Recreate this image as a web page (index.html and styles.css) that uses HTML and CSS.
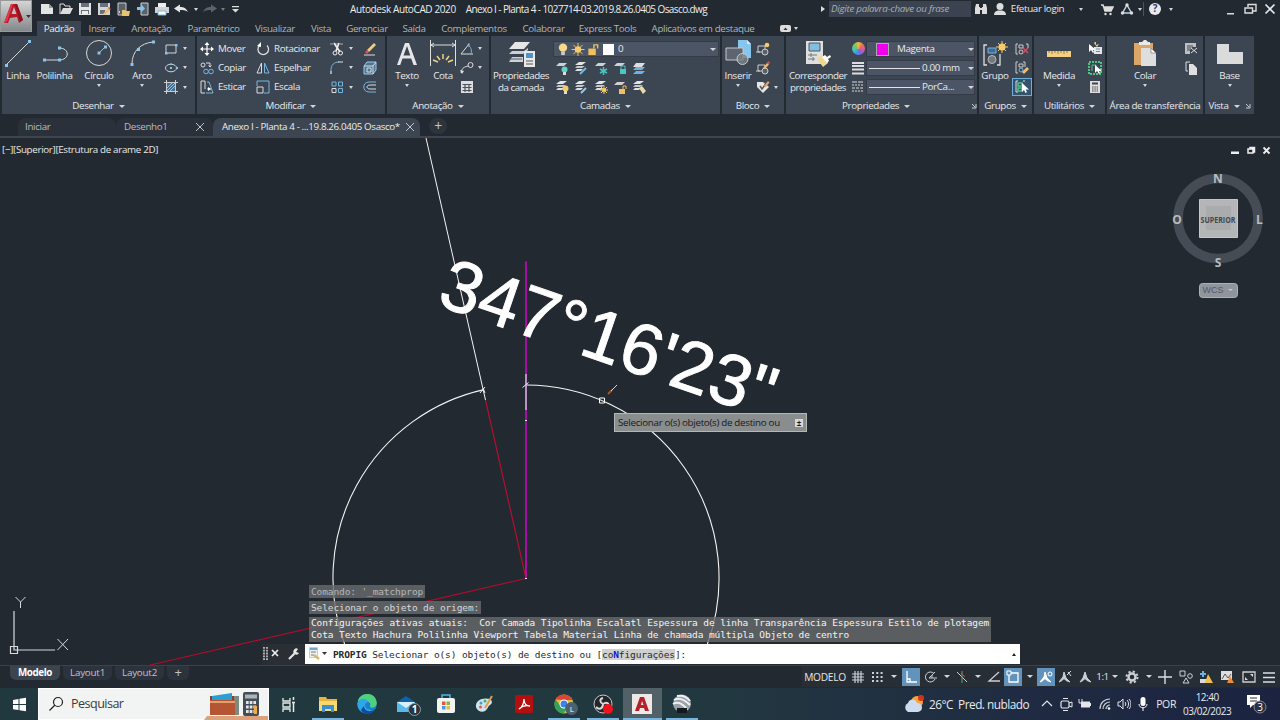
FILE: index.html
```
<!doctype html>
<html lang="pt-BR">
<head>
<meta charset="utf-8">
<title>Autodesk AutoCAD 2020</title>
<link rel="stylesheet" href="styles.css">
</head>
<body>

<svg class="defs">
	<symbol id="lay" viewBox="0 0 14 14">
		<path d="M5 1h7L8 4H1z" fill="#e4e6e6"/><path d="M3 5h8L8 7H1z" fill="#c6cacc"/><path d="M3 8h6L7 10H1z" fill="#dfe1e1"/>
	</symbol>
	<symbol id="lay1" viewBox="0 0 14 14"><path d="M4 2h8L9 5H1z" fill="#cfd2d3"/></symbol>
</svg>

<div class="top">
	<div class="app_btn">
		<svg width="32" height="32" viewBox="0 0 32 32"><path d="M3 22L10 3h6l6 16-4 3-2-6-7 1-2 5z" fill="#b8182a"/><path d="M10.500 13l2.500-7 2.500 7z" fill="#bcbec0"/><path d="M3 22L10 3h2L6 21z" fill="#e0394a"/><path d="M14 3h2l6 16-3 2z" fill="#8e1420"/><path d="M25 14h5l-2.500 3z" fill="#333"/></svg>
	</div>
	<div class="top_r">
		<div class="title_bar">
			<div class="quick">
				<svg viewBox="0 0 14 14"><path d="M1 2h8l4 4v6H1z" fill="#e3e4e4"/><path d="M9 2v4h4z" fill="#999"/></svg>
				<svg viewBox="0 0 14 14"><path d="M1 12V2h4l1 2h5v2" fill="none" stroke="#ddd"/><path d="M4 6h10l-3 6H1z" fill="#ddd"/></svg>
				<svg viewBox="0 0 14 14"><path d="M1 1h12v12H1z" fill="#e4e5e5"/><path d="M3 1h8v4H3zM3 8h8v4H3z" fill="#69717a"/><path d="M4 9h6v3H4z" fill="#eee"/></svg>
				<svg viewBox="0 0 14 14"><path d="M1 1h12v12H1z" fill="#d4d5d5"/><path d="M3 1h8v4H3zM3 8h5v4H3z" fill="#69717a"/><path d="M6 12l5-6 2 2-5 5z" fill="#efbd72"/><path d="M11 6l1-1 2 2-1 1z" fill="#d4524c"/></svg>
				<svg viewBox="0 0 14 14"><path d="M2 1h8v12H2z" fill="#59616b" stroke="#ccc"/><path d="M3 9h1v2H3z" fill="#ccc"/><path d="M6 8h3l1 1h4l-1 5H6z" fill="#e9c46c"/></svg>
				<svg viewBox="0 0 14 14"><path d="M5 1h7v12H5z" fill="#59616b" stroke="#ccc"/><path d="M1 5h4V2l4 4.500-4 4V8H1z" fill="#83c4ec"/></svg>
				<svg viewBox="0 0 14 14"><path d="M3 1h8v4H3z" fill="#eee"/><path d="M0 5h14v6H0z" fill="#d0d3d5"/><path d="M3 9h8v4H3z" fill="#fff" stroke="#7bb4d8"/></svg>
				<svg viewBox="0 0 14 14"><path d="M0 6.500l6-4v2.500c4 0 6 1 8 5-3-2-5-2-8-2v2.500z" fill="#e6e6e6"/></svg>
				<i class="dd"></i>
				<svg viewBox="0 0 14 14"><path d="M14 6.500l-6-4v2.500c-4 0-6 1-8 5 3-2 5-2 8-2v2.500z" fill="#5c636c"/></svg>
				<i class="dd dim"></i>
				<svg viewBox="0 0 14 14"><path d="M4 4h7v1.300H4zM4 7h7l-3.500 3.500z" fill="#ddd"/></svg>
			</div>
			<div class="doc_title"><span>Autodesk AutoCAD 2020</span><span>Anexo I - Planta 4 - 1027714-03.2019.8.26.0405 Osasco.dwg</span></div>
			<div class="info">
				<i class="right"></i>
				<div class="find">Digite palavra-chave ou frase</div>
				<svg viewBox="0 0 14 14"><path d="M2 2h3v3h1v7H1V6zM9 2h3l1 4v6H8V5h1zM6 6h2v2H6z" fill="#dcdcdc"/></svg>
				<svg viewBox="0 0 14 14"><circle cx="7" cy="4.500" r="3.500" fill="#ddd"/><path d="M1 13c0-3 2-4 4-4.500h4c2 .5 4 1.500 4 4.500z" fill="#ddd"/></svg>
				<span class="login">Efetuar login</span>
				<i class="dd"></i>
				<svg viewBox="0 0 14 14"><path d="M1 3h2l2 6h6l2-4H4" fill="none" stroke="#ddd" stroke-width="1.500"/><path d="M4 5h9l-2 4H5z" fill="#ddd"/><circle cx="5.500" cy="12" r="1.200" fill="#ddd"/><circle cx="10.500" cy="12" r="1.200" fill="#ddd"/></svg>
				<svg viewBox="0 0 14 14"><path d="M7 3l4.500 8h-9z" fill="none" stroke="#bcd0e0" stroke-width="1.500"/><circle cx="7" cy="3" r="1.700" fill="#ddd"/><circle cx="2.500" cy="11" r="1.700" fill="#ddd"/><circle cx="11.500" cy="11" r="1.700" fill="#ddd"/></svg>
				<i class="dd"></i>
				<b class="sep"></b>
				<div class="help">?</div>
				<i class="dd"></i>
			</div>
			<div class="win">
				<svg viewBox="0 0 14 14"><path d="M4 11h7v1.500H4z" fill="#ddd"/></svg>
				<svg viewBox="0 0 14 14"><path d="M5 5V2.500h8V9h-3M2 6h7.500v5H2z" fill="none" stroke="#ddd" stroke-width="1.400"/></svg>
				<svg viewBox="0 0 14 14"><path d="M2.500 2.500l9 9M11.500 2.500l-9 9" stroke="#e8e8e8" stroke-width="1.700"/></svg>
			</div>
		</div>
		<div class="menu">
			<span class="on">Padrão</span><span>Inserir</span><span>Anotação</span><span>Paramétrico</span><span>Visualizar</span><span>Vista</span><span>Gerenciar</span><span>Saída</span><span>Complementos</span><span>Colaborar</span><span>Express Tools</span><span>Aplicativos em destaque</span>
			<svg viewBox="0 0 11 7" width="11" height="7"><rect width="11" height="7" rx="2" fill="#ddd"/><path d="M3.500 5L5.500 2.500 7.500 5z" fill="#333"/></svg>
			<i class="dd"></i>
		</div>
	</div>
</div>

<div class="ribbon">
	<!-- Desenhar -->
	<div class="panel p_des">
		<div class="body">
			<div class="big"><svg viewBox="0 0 28 28"><path d="M2 26L25 3" stroke="#d8d8d8"/><path d="M1 25h3v3H1zM24 1h3v3h-3z" fill="#8ac4e8"/></svg>Linha</div>
			<div class="big"><svg viewBox="0 0 28 28"><path d="M3 21h15M18 9c11 0 11 12 0 12" fill="none" stroke="#d8d8d8"/><path d="M2 19.500h3v3H2zM17 19.500h3v3h-3zM17 7.500h3v3h-3z" fill="#8ac4e8"/></svg>Polilinha</div>
			<div class="big"><svg viewBox="0 0 28 28"><circle cx="14" cy="14" r="12.500" fill="none" stroke="#d8d8d8"/><path d="M14 14l6-6" stroke="#8ac4e8"/><path d="M12.500 12.500h3v3h-3zM19 6.500h3v3h-3z" fill="#8ac4e8"/></svg>Círculo<i class="dd"></i></div>
			<div class="big"><svg viewBox="0 0 28 28"><path d="M4 25C4 12 13 4 25 3" fill="none" stroke="#d8d8d8"/><path d="M2.500 24h3v3h-3zM9 9h3v3H9zM24 1.500h3v3h-3z" fill="#8ac4e8"/></svg>Arco<i class="dd"></i></div>
			<div class="col w34">
				<div class="row"><svg viewBox="0 0 14 14"><path d="M2 3h10v8H2z" fill="none" stroke="#d0d5da"/><path d="M1 10h2.500v2.500H1zM11 2h2.500v2.500H11z" fill="#8ac4e8"/></svg><i class="dd"></i></div>
				<div class="row"><svg viewBox="0 0 14 14"><ellipse cx="7" cy="7" rx="5.500" ry="3.800" fill="none" stroke="#d0d5da"/><path d="M6 6h2v2H6zM12 6h2v2h-2zM6 2.500h2v1.500H6z" fill="#8ac4e8"/></svg><i class="dd"></i></div>
				<div class="row"><svg viewBox="0 0 14 14"><path d="M3 3h8v8H3z" fill="#4c6f8e"/><path d="M3 8l5-5M3 11l8-8M6 11l5-5" stroke="#8ac4e8"/><path d="M2.500 0v14M11.500 0v14M0 2.500h14M0 11.500h14" stroke="#ccc"/></svg><i class="dd"></i></div>
			</div>
		</div>
		<div class="name">Desenhar<i class="dd"></i></div>
	</div>
	<!-- Modificar -->
	<div class="panel p_mod">
		<div class="body">
			<div class="col w56">
				<div class="row"><svg viewBox="0 0 14 14"><path d="M7 1v12M1 7h12" stroke="#fff" stroke-width="1.200"/><path d="M7 0l2.500 3h-5zM7 14l2.500-3h-5zM0 7l3-2.500v5zM14 7l-3-2.500v5z" fill="#fff"/></svg>Mover</div>
				<div class="row"><svg viewBox="0 0 14 14"><circle cx="3" cy="4" r="2" fill="none" stroke="#ddd"/><path d="M6 2h4v4M8.500 4.500L10 6l1.500-1.500" fill="none" stroke="#ddd"/><circle cx="6" cy="10.500" r="2.300" fill="none" stroke="#76b7df"/><circle cx="11" cy="10.500" r="2.300" fill="none" stroke="#76b7df"/></svg>Copiar</div>
				<div class="row"><svg viewBox="0 0 14 14"><path d="M5 13H1V1h4v8M7 9h4" fill="none" stroke="#ddd"/><path d="M7 2h2l4 11H6" fill="none" stroke="#76b7df"/><path d="M8 7l3 2-3 2z" fill="#fff"/></svg>Esticar</div>
			</div>
			<div class="col w74">
				<div class="row"><svg viewBox="0 0 14 14"><path d="M3.500 3.500A5.300 5.300 0 1 0 11 3.500" fill="none" stroke="#ddd" stroke-width="1.300"/><path d="M5 0v5l-4-1z" fill="#fff"/></svg>Rotacionar</div>
				<div class="row"><svg viewBox="0 0 14 14"><path d="M5.500 2v10H1z" fill="none" stroke="#ddd"/><path d="M8.500 2v10H13z" fill="none" stroke="#76b7df"/></svg>Espelhar</div>
				<div class="row"><svg viewBox="0 0 14 14"><path d="M1 6V1h12v12H8" fill="none" stroke="#76b7df"/><path d="M1 7h6v6H1z" fill="none" stroke="#ddd"/></svg>Escala</div>
			</div>
			<div class="col w32">
				<div class="row"><svg viewBox="0 0 14 14"><path d="M0 2h14" stroke="#aaa" stroke-dasharray="3 2"/><path d="M4 1l6 9M9 1L6 9" stroke="#eee" stroke-width="1.700"/><circle cx="5" cy="11" r="2" fill="none" stroke="#eee"/><circle cx="10.500" cy="11" r="2" fill="none" stroke="#eee"/></svg><i class="dd"></i></div>
				<div class="row"><svg viewBox="0 0 14 14"><path d="M1 13V9c0-5 3-8 8-8" fill="none" stroke="#76b7df"/><path d="M1 13v-3M8 1h5" stroke="#ddd"/></svg><i class="dd"></i></div>
				<div class="row"><svg viewBox="0 0 14 14"><path d="M2 2h4v4H2zM8.500 2h4v4h-4zM8.500 8.500h4v4h-4z" fill="none" stroke="#76b7df"/><path d="M2 8.500h4v4H2z" fill="none" stroke="#ddd"/></svg><i class="dd"></i></div>
			</div>
			<div class="col w20">
				<div class="row"><svg viewBox="0 0 14 14"><path d="M4 8l7-7 2 2-7 7z" fill="#f0cd83"/><path d="M2 10l2-2 2 2-2 2z" fill="#e4504c"/><path d="M1 13h11" stroke="#ddd"/></svg></div>
				<div class="row"><svg viewBox="0 0 14 14"><path d="M1 5l3-4h9v8l-3 4H1z" fill="#4b7696" stroke="#9ccbe6"/><path d="M1 5h9v8M10 5l3-4M4 7h4v4H4z" fill="none" stroke="#ddd"/></svg></div>
				<div class="row"><svg viewBox="0 0 14 14"><path d="M13 2H6c-7 0-7 10 0 10h7" fill="none" stroke="#76b7df"/><path d="M13 5H7c-4 0-4 4 0 4h6" fill="none" stroke="#ddd"/></svg></div>
			</div>
		</div>
		<div class="name">Modificar<i class="dd"></i></div>
	</div>
	<!-- Anotação -->
	<div class="panel p_ano">
		<div class="body">
			<div class="big w40"><svg viewBox="0 0 28 28"><path d="M4 26L12 4h4l8 22h-3.500l-2.300-6.500H9.500L7.200 26zM10.500 16.500h6.800L14 7z" fill="#e6e6e6" fill-rule="evenodd"/></svg>Texto<i class="dd"></i></div>
			<div class="big w32"><svg viewBox="0 0 28 28"><path d="M1.500 1v26M26.500 1v26M2 6h24M5 4L2 6l3 2M23 4l3 2-3 2" fill="none" stroke="#ddd"/><path d="M14 15v5M8 17l3 4M20 17l-3 4M4 21l5 2M24 21l-5 2" stroke="#f0d080" stroke-width="1.500"/></svg>Cota</div>
			<div class="col w28">
				<div class="row"><svg viewBox="0 0 14 14"><path d="M9 2L1 12h12" fill="none" stroke="#ddd"/><path d="M7 3c4 1 5 5 4 9M9 1v4" fill="none" stroke="#76b7df"/></svg><i class="dd"></i></div>
				<div class="row"><svg viewBox="0 0 14 14"><path d="M1 12c1-6 4-6 7-7" fill="none" stroke="#ddd"/><circle cx="10.500" cy="4" r="2.500" fill="none" stroke="#ddd"/><path d="M0 9l2 4 2-3z" fill="#ddd"/></svg><i class="dd"></i></div>
				<div class="row"><svg viewBox="0 0 14 14"><path d="M1 1h12v12H1z" fill="#ddd"/><path d="M2.500 4.500h9M2.500 7.500h9M2.500 10.500h9M5 4v8M9 4v8" stroke="#4b535f" stroke-width="1.200"/></svg></div>
			</div>
		</div>
		<div class="name">Anotação<i class="dd"></i></div>
	</div>
	<!-- Camadas -->
	<div class="panel p_cam">
		<div class="body">
			<div class="big w60"><svg viewBox="0 0 28 28"><path d="M8 3h15l-6 7H2z" fill="#e6e6e6"/><path d="M5 12h12l4-3v2l-5 4H2zM5 18h11v5H2z" fill="#cfd2d4"/><path d="M2 20h13" stroke="#59616c"/><path d="M17 12h11v16H17z" fill="#e9e9e9"/><path d="M19 14h7v5h-7z" fill="#4f96c8"/><path d="M19 22h7M19 25h7" stroke="#555"/></svg>Propriedades<br>da camada</div>
			<div class="lay_box">
				<div class="select">
					<svg viewBox="0 0 14 14"><circle cx="7" cy="5" r="4.500" fill="#f7d98a"/><path d="M5 9h4v4H5z" fill="#c9cbcc"/></svg>
					<svg viewBox="0 0 14 14"><circle cx="7" cy="7" r="3.500" fill="#f4cb68"/><path d="M7 0v14M0 7h14M2 2l10 10M12 2L2 12" stroke="#f4cb68"/></svg>
					<svg viewBox="0 0 14 14"><path d="M2 6h8v7H2z" fill="#f0c05c"/><path d="M8 6V2h4v4" fill="none" stroke="#f0c05c" stroke-width="1.500"/></svg>
					<b class="sw white"></b><span>0</span><i class="dd"></i>
				</div>
				<div class="lay_row">
					<svg viewBox="0 0 14 14"><use href="#lay1"/><circle cx="9.500" cy="8.500" r="3" fill="#63d5c6"/><path d="M8 11h3v3H8z" fill="#ddd"/></svg>
					<svg viewBox="0 0 14 14"><use href="#lay"/><path d="M6 13l6-6" stroke="#76b7df" stroke-width="2"/></svg>
					<svg viewBox="0 0 14 14"><use href="#lay1"/><path d="M9.500 6v8M6 8l7 4M13 8l-7 4" stroke="#4cc6c0" stroke-width="1.500"/></svg>
					<svg viewBox="0 0 14 14"><use href="#lay1"/><path d="M7 8h6v5H7z" fill="#4cc6c0"/><path d="M8 8V5h4v3" fill="none" stroke="#4cc6c0"/></svg>
					<svg viewBox="0 0 14 14"><path d="M4 2h9l-3 4H1z" fill="#ddd"/><path d="M4 6h9l-3 3H1zM4 10h9l-3 3H1z" fill="#6fb2e0"/></svg>
				</div>
				<div class="lay_row">
					<svg viewBox="0 0 14 14"><use href="#lay"/><circle cx="10.500" cy="8.500" r="3" fill="#f4cb68"/><path d="M9 11h3v3H9z" fill="#ddd"/></svg>
					<svg viewBox="0 0 14 14"><use href="#lay"/><path d="M7 13l5-5" stroke="#9bc8e4" stroke-width="2"/></svg>
					<svg viewBox="0 0 14 14"><use href="#lay"/><circle cx="10" cy="10" r="2" fill="#f4cb68"/><path d="M10 6v8M6 10h8M7 7l6 6M13 7l-6 6" stroke="#f4cb68"/></svg>
					<svg viewBox="0 0 14 14"><use href="#lay1"/><path d="M6 9h6v5H6z" fill="#f0c05c"/><path d="M10 9V6h3v3" fill="none" stroke="#f0c05c"/></svg>
					<svg viewBox="0 0 14 14"><use href="#lay"/><path d="M7 8l3-2 4 5-3 3z" fill="#ecdca4"/></svg>
				</div>
			</div>
		</div>
		<div class="name">Camadas<i class="dd"></i></div>
	</div>
	<!-- Bloco -->
	<div class="panel p_blo">
		<div class="body">
			<div class="big w32"><svg viewBox="0 0 28 28"><path d="M14 1h9l4 4v14H14z" fill="#86c6ee"/><path d="M23 1v4h4z" fill="#d5ecfa"/><path d="M2 9h17v12H2z" fill="#5d6570" stroke="#c8cacc"/><circle cx="18.500" cy="20" r="5.500" fill="#7b828a" fill-opacity=".8" stroke="#c8cacc"/></svg>Inserir<i class="dd"></i></div>
			<div class="col w30">
				<div class="row"><svg viewBox="0 0 14 14"><path d="M2 4h7v6H2z" fill="none" stroke="#ccc"/><circle cx="9" cy="10" r="3" fill="#59616d" stroke="#ccc"/><path d="M0 10h4" stroke="#ccc"/><circle cx="11" cy="3" r="2.300" fill="#f4cb68"/></svg></div>
				<div class="row"><svg viewBox="0 0 14 14"><path d="M2 4h7v6H2z" fill="none" stroke="#ccc"/><circle cx="9" cy="10" r="3" fill="#59616d" stroke="#ccc"/><path d="M0 10h4" stroke="#ccc"/><path d="M7 7l4-5 2 1.500L9 8z" fill="#efb972"/><path d="M11 2l1-2 2 1.500-1 2z" fill="#d4524c"/></svg></div>
				<div class="row"><svg viewBox="0 0 14 14"><path d="M1 2h6l6 5-6 6-6-6z" fill="#e6e6e6"/><path d="M4 6l2 3 5-7" fill="none" stroke="#555" stroke-width="1.500"/><path d="M8 6l4-5 1.500 1.500-4 5z" fill="#ef9f62"/></svg><i class="dd"></i></div>
			</div>
		</div>
		<div class="name">Bloco<i class="dd"></i></div>
	</div>
	<!-- Propriedades -->
	<div class="panel p_pro">
		<div class="body">
			<div class="big w64"><svg viewBox="0 0 28 28"><path d="M2 2h17v23H2z" fill="#dedfdf"/><path d="M5 4h11v8H5z" fill="#84bede" stroke="#4d5864"/><path d="M4 16h9M4 20h7M7 14v4M9 18v4" stroke="#777"/><path d="M13 20l5-4 6 8-5 4z" fill="#f0d794"/><path d="M18 18l3-2 2 2 3-2 1 2-3 2 1 2-2 2z" fill="#fff"/></svg>Corresponder<br>propriedades</div>
			<div class="col ic">
				<div class="row"><b class="wheel"></b></div>
				<div class="row"><svg viewBox="0 0 14 14"><path d="M1 2h12M1 5h12M1 8.500h12M1 12.500h12" stroke="#ddd" stroke-width="1.800"/></svg></div>
				<div class="row"><svg viewBox="0 0 14 14"><path d="M1 2h12" stroke="#ddd" stroke-dasharray="5 1"/><path d="M1 5h12M1 11h12" stroke="#ddd" stroke-dasharray="2 1"/><path d="M1 8h12" stroke="#ddd" stroke-dasharray="3 1"/></svg></div>
			</div>
			<div class="fields">
				<div class="select"><b class="sw mag"></b><span>Magenta</span><i class="dd"></i></div>
				<div class="select"><b class="ln"></b><span>0.00 mm</span><i class="dd"></i></div>
				<div class="select"><b class="ln"></b><span>PorCa...</span><i class="dd"></i></div>
			</div>
		</div>
		<div class="name">Propriedades<i class="dd"></i><svg class="launch" viewBox="0 0 6 6"><path d="M1 1l3 3M5 1v4H1" fill="none" stroke="#ccc"/></svg></div>
	</div>
	<!-- Grupos -->
	<div class="panel p_gru">
		<div class="body">
			<div class="big w32"><svg viewBox="0 0 28 28"><path d="M6 6H3v20h3M16 26h3V15" fill="none" stroke="#ddd" stroke-width="1.300"/><path d="M7 9h8v5H7z" fill="#3e6c98" stroke="#7ab2da"/><circle cx="11" cy="20.500" r="4" fill="#737a84" stroke="#bbb"/><circle cx="21" cy="8" r="3.500" fill="#f4cb68"/><path d="M21 2v12M15 8h12M17 4l8 8M25 4l-8 8" stroke="#f4cb68"/></svg>Grupo</div>
			<div class="col w21">
				<div class="row"><svg viewBox="0 0 14 14"><path d="M3 2H1v10h2M11 2h2v4M4 3h4v3H4z" fill="none" stroke="#ccc"/><circle cx="6" cy="10" r="2" fill="none" stroke="#ccc"/><path d="M8 6l5 5M13 6l-5 5" stroke="#dd4860" stroke-width="1.500"/></svg></div>
				<div class="row"><svg viewBox="0 0 14 14"><path d="M3 1H1v11h2M8 1h2v5M4 3h4v3H4z" fill="none" stroke="#ccc"/><circle cx="6" cy="9" r="2" fill="none" stroke="#76b7df"/><path d="M7 11l5-5 2 2-5 5z" fill="#efbd72"/></svg></div>
				<div class="row sel"><svg viewBox="0 0 14 14"><path d="M3 1H1v11h2M8 1h2" fill="none" stroke="#ddd"/><path d="M3 3h4v3H3zM3 8h4v3H3z" fill="none" stroke="#54c184" stroke-width="1.500"/><path d="M7 3v9l2-2 1.500 3 1.500-1-1.300-2.500H14z" fill="#fff"/></svg></div>
			</div>
		</div>
		<div class="name">Grupos<i class="dd"></i></div>
	</div>
	<!-- Utilitários -->
	<div class="panel p_uti">
		<div class="body">
			<div class="big w50"><svg viewBox="0 0 28 28"><path d="M2 12h24v6H2z" fill="#f3d084"/><path d="M4 12v2M7 12v3M10 12v2M13 12v3M16 12v2M19 12v3M22 12v2" stroke="#a8802e"/></svg>Medida<i class="dd"></i></div>
			<div class="col w21">
				<div class="row"><svg viewBox="0 0 14 14"><path d="M6 5h8v7H6z" fill="#e6e6e6"/><path d="M8 7h4M8 9.500h4" stroke="#5a95bd"/><path d="M1 2v8l2-2 2 3 1-1-1-2h3z" fill="#fff"/><path d="M6 1l2-2v4l3-1-2 3z" fill="#f4cb68"/></svg></div>
				<div class="row"><svg viewBox="0 0 14 14"><path d="M1 1h12v12H1z" fill="none" stroke="#54c184" stroke-width="2" stroke-dasharray="2 1"/><path d="M4 10V4h4v5h2" fill="none" stroke="#54c184"/><path d="M7 4v8l2-2 2 3 1-1-1-2h3z" fill="#fff"/></svg></div>
				<div class="row"><svg viewBox="0 0 14 14"><path d="M2 1h10v12H2z" fill="#ddd"/><path d="M4 3.500h6" stroke="#444" stroke-width="2"/><path d="M4 7h6M4 9h6M4 11h6" stroke="#444" stroke-dasharray="1.500 .8"/></svg></div>
			</div>
		</div>
		<div class="name">Utilitários<i class="dd"></i></div>
	</div>
	<!-- Área de transferência -->
	<div class="panel p_are">
		<div class="body">
			<div class="big w44"><svg viewBox="0 0 28 28"><path d="M3 4h19v22H3z" fill="#dba667"/><path d="M8 3h3l2-2h2l2 2h2v3H8z" fill="#e9e9e9"/><path d="M10 9h10l5 5v13H10z" fill="#dedede"/><path d="M20 9v5h5z" fill="#fff" stroke="#666" stroke-width=".6"/></svg>Colar<i class="dd"></i></div>
			<div class="col w24">
				<div class="row"><svg viewBox="0 0 14 14"><path d="M1 1h11v4H8l-2 3v4H1z" fill="#bdc0c2"/><path d="M3 4h6M3 6h4M3 8h3" stroke="#444"/><path d="M7 6l6 5M7 11l6-5" stroke="#ddd"/></svg></div>
				<div class="row"><svg viewBox="0 0 14 14"><path d="M6 1H2v9h2" fill="none" stroke="#ddd"/><path d="M5 3h4l4 4v7H5z" fill="#e0e0e0"/></svg></div>
			</div>
		</div>
		<div class="name">Área de transferência</div>
	</div>
	<!-- Vista -->
	<div class="panel p_vis">
		<div class="body">
			<div class="big w49"><svg viewBox="0 0 28 28"><path d="M1 5h12v8h14v12H1z" fill="#dadcdc"/></svg>Base<i class="dd"></i></div>
		</div>
		<div class="name">Vista<i class="dd"></i><svg class="launch" viewBox="0 0 6 6"><path d="M1 1l3 3M5 1v4H1" fill="none" stroke="#ccc"/></svg></div>
	</div>
</div>

<div class="files">
	<div class="tab t1">Iniciar</div>
	<div class="tab t2">Desenho1<i class="x"></i></div>
	<div class="tab t3 on">Anexo I - Planta 4 - ...19.8.26.0405 Osasco*<i class="x"></i></div>
	<div class="add">+</div>
</div>

<div class="canvas">
	<svg class="draw" width="1280" height="527" viewBox="0 138 1280 527">
		<path d="M526 578.500L150 665" stroke="#a80f2c" stroke-width="1.200"/>
		<path d="M485.500 400L526 578.500" stroke="#b40f2c" stroke-width="1.200"/>
		<path d="M426 138L485.500 400" stroke="#f4f4f4"/>
		<path d="M484 389.600A193 193 0 0 0 344.600 644M526 385A193 193 0 0 1 707.400 644" fill="none" stroke="#f4f4f4" stroke-width="1.100"/>
		<path d="M526 261.500V578" stroke="#a410a4" stroke-width="2"/>
		<path d="M526 374v36" stroke="#c8c8d0" stroke-width="1.400"/>
		<path d="M480 393l5-6M522.500 387.500l6-5M525 420.500h2M525 578.500h2M483 388l2 5" stroke="#eee"/>
		<text class="angle" transform="translate(435.500 304.500) rotate(19)">347°16'23"</text>
		<path d="M599.500 398h5v5h-5z" fill="none" stroke="#fff"/>
		<path d="M608 394l4-4" stroke="#a05a2a" stroke-width="2"/><path d="M611 391l6-6" stroke="#ddd8c8"/>
		<!-- UCS -->
		<path d="M14 611v39h41M10.500 646.500h7v7h-7z" fill="none" stroke="#d8dadc" stroke-width="1.200"/>
		<path d="M15.500 597l5 5 5-5M20.500 602v6M57.500 639l10.500 11M68 639L57.500 650" fill="none" stroke="#d8dadc"/>
		<!-- viewcube -->
		<circle cx="1218" cy="218.500" r="40" fill="none" stroke="#454c55" stroke-width="9.500"/>
		<path d="M1199.500 199.500h38v38h-38z" fill="#b3b5b6" stroke="#c4c6c7"/><path d="M1206 206h25v24h-25z" fill="#a9abac"/>
		<text class="cube" x="1200.500" y="222.500" textLength="35" lengthAdjust="spacingAndGlyphs">SUPERIOR</text>
		<g class="compass"><text x="1218" y="182.500">N</text><text x="1218" y="266.500">S</text><text x="1177" y="224">O</text><text x="1259.500" y="224">L</text></g>
		<rect x="1199.500" y="283.500" width="38" height="14" rx="3" fill="#8f949d" stroke="#aeb2b8"/>
		<text class="wcs" x="1202.500" y="293">WCS</text><path d="M1228 289h5l-2.500 2z" fill="#c8cacc"/>
		<path d="M1231 151.500h8v2.500h-8z" fill="#eee"/><path d="M1248 149h5v4h-5zM1250 149v-1.500h4.500v4.500h-1.500" fill="none" stroke="#eee" stroke-width="1.500"/><path d="M1263.500 147.500l6 6M1269.500 147.500l-6 6" stroke="#eee" stroke-width="1.800"/>
	</svg>
	<div class="vp_label">[−][Superior][Estrutura de arame 2D]</div>
	<div class="tip">Selecionar o(s) objeto(s) de destino ou<b>±</b></div>
	<div class="cmd">
		<div class="hist dim1">Comando: '_matchprop</div>
		<div class="hist dim2">Selecionar o objeto de origem:</div>
		<div class="hist two">Configurações ativas atuais:  Cor Camada Tipolinha Escalatl Espessura de linha Transparência Espessura Estilo de plotagem
Cota Texto Hachura Polilinha Viewport Tabela Material Linha de chamada múltipla Objeto de centro</div>
		<div class="line">
			<div class="grip">
				<svg width="42" height="20" viewBox="0 0 42 20"><path d="M2 3v13M5 3v13" stroke="#ccc" stroke-width="1.600" stroke-dasharray="1.800 1"/><path d="M10 6l6 6M16 6l-6 6" stroke="#eee" stroke-width="1.700"/><path d="M27 15l7-7" stroke="#e6e6e6" stroke-width="2.200"/><path d="M36 5a3 3 0 1 0 1 4l-3-1z" fill="#e6e6e6"/></svg>
			</div>
			<div class="input">
				<svg width="20" height="16" viewBox="0 0 20 16"><path d="M1.500 1.500h8v10h-8z" fill="#eef3f6" stroke="#c4ccd2"/><path d="M2 3h7" stroke="#6fa8cc" stroke-width="2"/><path d="M3 6h5M3 9h3" stroke="#777"/><path d="M6 9l5 4" stroke="#d8b868" stroke-width="2.500"/><path d="M14 6h5l-2.500 3z" fill="#333"/></svg>
				<span><b>PROPIG</b> Selecionar o(s) objeto(s) de destino ou [<em>co<u>N</u>figurações</em>]:</span>
				<i class="up"></i>
			</div>
		</div>
	</div>
</div>

<div class="status">
	<div class="layouts">
		<span class="on">Modelo</span><span>Layout1</span><span>Layout2</span><span class="plus">+</span>
	</div>
	<div class="tools">
		<span class="mod">MODELO</span>
		<svg viewBox="0 0 14 14"><path d="M4 1v12M7 1v12M10 1v12M1 4h12M1 7h12M1 10h12" stroke="#cdd0d4" stroke-width="1.200"/></svg>
		<svg viewBox="0 0 14 14"><path d="M2 3h11M2 7h11M2 11h11" stroke="#cdd0d4" stroke-width="2" stroke-dasharray="2 2.300"/></svg>
		<i class="dd"></i>
		<svg class="hi" viewBox="0 0 14 14"><path d="M3 1v11h10M3 9h3v3" fill="none" stroke="#fff" stroke-width="1.300"/></svg>
		<svg viewBox="0 0 14 14"><path d="M11 3.500A5 5 0 1 0 12 9M6 8l6-6M6 8h8M9 5v3" fill="none" stroke="#cdd0d4"/></svg>
		<i class="dd"></i>
		<svg viewBox="0 0 14 14"><path d="M2 2l10 10" stroke="#cdd0d4"/><path d="M7 1v12" stroke="#5d9f74"/><path d="M6 3l4 4" stroke="#b05a62"/></svg>
		<i class="dd"></i>
		<svg viewBox="0 0 14 14"><path d="M12 2L2 11h11" fill="none" stroke="#cdd0d4" stroke-width="1.300"/></svg>
		<svg class="hi" viewBox="0 0 14 14"><path d="M3 3h9v9H3z" fill="none" stroke="#fff" stroke-width="1.300"/><path d="M1 1h4v4H1z" fill="#6193bd" stroke="#fff"/></svg>
		<i class="dd"></i>
		<svg class="hi" viewBox="0 0 14 14"><path d="M6 2l2 6 4 4-4-1.500-2-2-2 2L1 12l4-5z" fill="#fff" stroke="#fff"/><circle cx="11" cy="4" r="2" fill="none" stroke="#fff"/></svg>
		<svg viewBox="0 0 14 14"><path d="M6 2l2 6 4 4-4-1.500-2-2-2 2L1 12l4-5z" fill="#cdd0d4" stroke="#cdd0d4"/><path d="M9 5l4-4M10 2l3 4" stroke="#ddd"/></svg>
		<svg viewBox="0 0 14 14"><path d="M7 2l2 6 4 4-4-1.500-2-2-2 2L2 12l3-4z" fill="#cdd0d4" stroke="#cdd0d4"/></svg>
		<span class="one">1:1</span>
		<i class="dd"></i>
		<svg viewBox="0 0 14 14"><circle cx="7" cy="7" r="3.500" fill="none" stroke="#cdd0d4" stroke-width="2.400"/><circle cx="7" cy="7" r="5.500" fill="none" stroke="#cdd0d4" stroke-width="2" stroke-dasharray="2.200 2.120"/></svg>
		<i class="dd"></i>
		<svg viewBox="0 0 14 14"><path d="M7 0v14M0 7h14" stroke="#dcdfe2" stroke-width="1.400"/></svg>
		<svg viewBox="0 0 14 14"><path d="M1 1h5v5H1zM7 8l3 5H4z" fill="none" stroke="#cdd0d4"/><circle cx="11" cy="6" r="2.300" fill="none" stroke="#cdd0d4"/></svg>
		<svg viewBox="0 0 14 14"><path d="M1 4h6M4 1v6" stroke="#6fb2e0" stroke-width="2"/><path d="M1 9h8v4H1z" fill="#d9dadb"/><path d="M9 4l5 9H6z" fill="#f0c04e"/></svg>
		<svg viewBox="0 0 14 14"><path d="M1 1h11v9H1z" fill="#dedede"/><path d="M2 9l3-5 3 4 3-4" fill="none" stroke="#555"/><path d="M10 6l4 7H7z" fill="#ee8b3a"/></svg>
		<svg viewBox="0 0 14 14"><path d="M1 2h12v10H1z" fill="none" stroke="#cdd0d4" stroke-width="1.300"/><path d="M8 4h3v3zM6 10H3V7z" fill="#ddd"/></svg>
		<svg viewBox="0 0 14 14"><path d="M1 3h12M1 7.500h12M1 12h12" stroke="#dcdfe2" stroke-width="1.400"/></svg>
	</div>
</div>

<div class="task">
	<div class="start"><svg width="15" height="15" viewBox="0 0 15 15"><path d="M1 3l5.500-1v5H1zM7.500 1.800L14 .8V7H7.500zM1 8h5.500v5L1 12.200zM7.500 8H14v6.200l-6.500-1z" fill="#fff"/></svg></div>
	<div class="search">
		<svg width="16" height="16" viewBox="0 0 16 16"><circle cx="10" cy="6" r="4.500" fill="none" stroke="#222" stroke-width="1.200"/><path d="M7 9l-5.500 5.500" stroke="#222" stroke-width="1.200"/></svg>
		<span>Pesquisar</span>
		<svg class="art" width="64" height="32" viewBox="0 0 64 32"><path d="M3 28h61v4H0z" fill="#d9a27c"/><path d="M6 8h29v19H6z" fill="#8a4028"/><path d="M30 8h5v19h-5z" fill="#7c8a80"/><path d="M8 8l20-3v8H8z" fill="#2a9fd0"/><path d="M6 12h25v15H6z" fill="#b55534"/><path d="M6 14h25" stroke="#e0a070" stroke-width="2"/><rect x="39" y="4" width="16" height="24" rx="2" fill="#454e57"/><path d="M41 6.500h12v4H41z" fill="#a8b6bb"/><path d="M42 14.500h10M42 19h10M42 23.500h10" stroke="#e2e6e8" stroke-width="3" stroke-dasharray="2.700 1"/><path d="M50 18h3v8h-3z" fill="#f2a94a"/></svg>
	</div>
	<div class="apps">
		<div class="app"><svg viewBox="0 0 20 20"><path d="M4 4v3h7V4M4 9h7v4H4zM4 18v-3h7v3" fill="none" stroke="#e8eaec" stroke-width="1.300"/><path d="M14.500 3v3M14.500 8v10M13 8.500h3" stroke="#e8eaec" stroke-width="1.500"/></svg></div>
		<div class="app run"><svg viewBox="0 0 20 20"><path d="M1 3h7l1 2h10v12H1z" fill="#e9b43c"/><path d="M1 7h18v10H1z" fill="#f8d970"/><path d="M4 18v-7h12v7h-3v-3H7v3z" fill="#3b8fd0"/></svg></div>
		<div class="app"><svg viewBox="0 0 20 20"><circle cx="10" cy="10" r="9.800" fill="#1b7fd0"/><path d="M1 6C5-3 19-2 19.800 9c0 5-7 6-7 3 3-3-5-8-11-4z" fill="#4fd07f"/><path d="M.5 9C3 3 10 4 11 8c-5 1-4 9 6 8-6 6-17 3-16.500-7z" fill="#2fa6e8"/><path d="M7 12c0 5 6 7 11 3-3 6-12 6-14 1z" fill="#104a9c"/></svg></div>
		<div class="app"><svg viewBox="0 0 20 20"><path d="M0 8l9-6 9 6v10H0z" fill="#1261a8"/><path d="M0 8h18v10H0z" fill="#58b9ee"/><path d="M0 8l9 6 9-6z" fill="#d7effc"/></svg><b class="badge">1</b></div>
		<div class="app"><svg viewBox="0 0 20 20"><path d="M6 4V1h8v3" fill="none" stroke="#4bb5e8" stroke-width="1.500"/><rect x="1" y="4" width="18" height="15" rx="2" fill="#f3f3f3"/><path d="M6 7.500h3.500V11H6z" fill="#e65b3a"/><path d="M10.500 7.500H14V11h-3.500z" fill="#7fb842"/><path d="M6 12h3.500v3.500H6z" fill="#3f9fe0"/><path d="M10.500 12H14v3.500h-3.500z" fill="#f2b93a"/></svg></div>
		<div class="app"><svg viewBox="0 0 20 20"><path d="M1 13C0 6 8 3 15 5c3 2 2 5 0 6s-2 4-5 6-8 0-9-4z" fill="#cfe3ee"/><circle cx="6" cy="9" r="1.500" fill="#3f9fe0"/><circle cx="10" cy="7" r="1.500" fill="#4fae5a"/><circle cx="5.500" cy="13" r="1.500" fill="#e65b3a"/><path d="M10 14l7-12" stroke="#dca04c" stroke-width="2"/></svg></div>
		<div class="app"><svg viewBox="0 0 20 20"><rect x="1" y="1" width="18" height="18" rx="2" fill="#b40e0e"/><path d="M5 15c3-1 5-6 5-10 0 4 2 7 6 7-4-1-8 0-11 3z" fill="none" stroke="#fff" stroke-width="1.300"/></svg></div>
		<div class="app run"><svg viewBox="0 0 20 20"><circle cx="10" cy="10" r="9.500" fill="#e2b93b"/><path d="M1.500 5.500A9.500 9.500 0 0 1 18.500 6H10z" fill="#dc4437"/><path d="M1.500 5.500A9.500 9.500 0 0 0 10 19.500l2-6-5-1z" fill="#33a158"/><circle cx="10" cy="10" r="4.500" fill="#fff"/><circle cx="10" cy="10" r="3.500" fill="#3f7fe8"/></svg><b class="badge l">L</b></div>
		<div class="app run"><svg viewBox="0 0 20 20"><circle cx="10" cy="10" r="9" fill="#23262a" stroke="#c8c8c8"/><path d="M10 4c-4 1-3 5 0 6M10 10c4-3 7 0 5 4M10 10c0 5-4 6-7 3" fill="none" stroke="#d8d8d8" stroke-width="2"/><circle cx="15" cy="15" r="5" fill="#f0121c"/></svg></div>
		<div class="app run act"><svg viewBox="0 0 20 20"><path d="M0 0h20v20H0z" fill="#efe9e6"/><path d="M3 17L8 3h4l5 14h-4l-1-3H8l-1 3zM9 11h2.500L10 7z" fill="#b4202c" fill-rule="evenodd"/></svg></div>
		<div class="app run"><svg viewBox="0 0 20 20"><circle cx="10" cy="9.500" r="9" fill="#9aa1a8"/><path d="M2 6c5-3 11 0 16 5M1 10c5-3 11 0 14 6M5 2c5-1 10 1 13 5" fill="none" stroke="#eef0f2" stroke-width="2"/><path d="M5 14h10v5H5z" fill="#15181c"/></svg></div>
	</div>
	<div class="tray">
		<svg width="22" height="20" viewBox="0 0 22 20"><circle cx="14" cy="8" r="6" fill="#f5a33a"/><circle cx="18" cy="4" r="3" fill="#d8321e"/><path d="M5 18a5 5 0 0 1 0-9c2-5 8-4 9 0 6 0 7 8 1 9z" fill="#cfdcf0"/></svg>
		<span class="wt">26°C&nbsp;&nbsp;Pred. nublado</span>
		<svg viewBox="0 0 14 14"><path d="M2 9l5-5 5 5" fill="none" stroke="#e4e6ea" stroke-width="1.200"/></svg>
		<svg viewBox="0 0 14 14"><rect x="2" y="4" width="8" height="7" rx="1.500" fill="none" stroke="#e4e6ea" stroke-width="1.200"/><path d="M10 6l3-1v5l-3-1M4 1.500h5M4 13.500h5" fill="none" stroke="#e4e6ea"/></svg>
		<svg viewBox="0 0 14 14"><path d="M3 4.500h9v6H3z" fill="#e4e6ea"/><path d="M1 2v4h3V2M12.500 6v3" fill="none" stroke="#e4e6ea"/></svg>
		<svg viewBox="0 0 14 14"><path d="M2 12C2 6 6 2 12 2M5 12c0-4 3-7 7-7M8 12c0-2 2-4 4-4" fill="none" stroke="#c8ccd2" stroke-width="1.200"/><circle cx="11" cy="11.500" r="1.300" fill="#fff"/></svg>
		<svg viewBox="0 0 14 14"><path d="M1 5h2l3-3v10L3 9H1zM8 5c1 1 1 3 0 4M10 3c2 2 2 6 0 8M12 2c2.500 3 2.500 7 0 10" fill="none" stroke="#e4e6ea"/></svg>
		<svg viewBox="0 0 14 14"><rect x="4.500" y="0" width="5" height="9" rx="2.500" fill="#fff"/><path d="M3 7c0 5 8 5 8 0M7 11v3" fill="none" stroke="#fff"/></svg>
		<span class="por">POR</span>
		<div class="clock">12:40<br>03/02/2023</div>
		<div class="note"><svg width="22" height="22" viewBox="0 0 22 22"><path d="M1 2h13v10H7l-3 3v-3H1z" fill="#fff"/><path d="M4 5h7M4 8h7" stroke="#333"/><circle cx="14" cy="14" r="6" fill="#2a2e40" stroke="#888"/><text x="14" y="17.500">3</text></svg></div>
	</div>
</div>

</body>
</html>
```
FILE: styles.css
```
*{margin:0;padding:0;box-sizing:border-box;}
body{width:1280px;height:720px;overflow:hidden;background:#222930;color:#e8eaec;font:9.8px/12px "Open Sans","Noto Sans",sans-serif;letter-spacing:-.35px;display:flex;flex-direction:column;}
svg{display:block;flex:none;}
.defs{display:none;}
.dd{width:0;height:0;border:2.5px solid transparent;border-top:3px solid #d4d6d9;border-bottom:0;flex:none;}
.dd.dim{border-top-color:#777c84;}

/* title bar + menu */
.top{height:36px;display:flex;}
.app_btn{width:32px;height:32px;background:linear-gradient(#d3d4d5,#85888b);border:1px solid #999;overflow:hidden;}
.top_r{width:1248px;}
.title_bar{height:18px;display:flex;}
.quick{width:318px;padding-left:5px;display:grid;grid-template-columns:19px 19px 19px 19px 20px 19px 19px 20px 9px 19px 8px 16px;justify-items:center;align-items:center;}
.quick svg,.info svg,.win svg{width:14px;height:14px;}
.doc_title{width:467px;color:#eceeef;font-size:10px;line-height:19px;display:flex;gap:10px;white-space:nowrap;letter-spacing:-.38px;}
.doc_title span+span{letter-spacing:-.6px;}
.info{width:406px;display:grid;grid-template-columns:12px 142px 19px 19px 57px 30px 21px 20px 5px 15px 14px 15px;align-items:center;justify-items:center;}
.info .right{border:3px solid transparent;border-left:4px solid #ddd;border-right:0;}
.find{width:142px;height:16px;background:#3b4350;color:#a9afb7;font-style:italic;line-height:16px;padding-left:2px;letter-spacing:-.28px;}
.login{white-space:nowrap;}
.sep{width:1px;height:14px;background:#4c535c;margin-right:12px;}
.help{width:12px;height:12px;border-radius:50%;background:#e8eaee;color:#283e70;font-weight:bold;text-align:center;margin-right:18px;}
.info .dd:last-child{margin-right:16px;}
.win{display:flex;gap:6px;padding-top:2px;}
.menu{height:18px;padding-left:5px;display:grid;grid-template-columns:44px 42px 57px 67px 56px 36px 56px 38px 82px 57px 71px 120px 28px 10px;text-align:center;line-height:15px;padding-top:3px;color:#b1b6bb;white-space:nowrap;justify-items:center;align-items:center;}
.menu span{width:100%;height:15px;}
.menu svg{justify-self:end;}
.menu .on{background:#3c4552;color:#eceeef;}

/* ribbon */
.ribbon{height:78px;display:flex;gap:2px;padding-left:2px;}
.panel{background:#3c4552;display:flex;flex-direction:column;}
.p_des{width:193px;}
.p_mod{width:188px;}
.p_ano{width:102px;}
.p_cam{width:229px;}
.p_blo{width:62px;}
.p_pro{width:191px;}
.p_gru{width:53px;}
.p_uti{width:71px;}
.p_are{width:96px;}
.p_vis{width:49px;}
.body{height:61px;padding-top:3px;display:flex;}
.name{height:17px;padding-top:1px;display:flex;align-items:center;justify-content:center;gap:5px;white-space:nowrap;}
.name .dd{border-width:3px 3px 0;}
.launch{width:6px;height:6px;}
.p_pro .name{padding-left:56px;justify-content:flex-start;}
.p_pro .launch{margin-left:56px;}
.big{width:32px;text-align:center;display:flex;flex-direction:column;align-items:center;line-height:12px;white-space:nowrap;}
.big svg{width:28px;height:28px;margin-bottom:3px;}
.big .dd{margin-top:2px;}
.p_des .big:nth-child(2){width:41px;}
.p_des .big:nth-child(3){width:48px;}
.p_des .big:nth-child(4){width:38px;}
.big.w32{width:32px;}
.big.w40{width:40px;}
.big.w44{width:76px;}
.big.w49{width:49px;}
.big.w50{width:50px;}
.big.w60{width:60px;display:block;}
.big.w64{width:64px;display:block;}
.w60,.w64{letter-spacing:-.45px;}
.w60 svg,.w64 svg{margin:0 auto 3px;}
.col{display:flex;flex-direction:column;}
.row{height:19.3px;display:flex;align-items:center;gap:4px;white-space:nowrap;}
.row svg{width:14px;height:14px;}
.w34{width:34px;padding-left:3px;}
.w56{width:60px;padding-left:3px;}
.w74{width:74px;margin-left:-1px;}
.w34 .row,.w32 .row{gap:5px;}
.col.w32{width:33px;}
.w20{width:20px;}
.w28{width:28px;padding-left:1px;}
.w30{width:30px;padding-left:2px;}
.w21{width:21px;align-items:center;}
.w24{width:16px;padding-left:1px;}
.row.sel{width:20px;height:18px;background:#32546e;border:1px solid #6eaed8;justify-content:center;}
.ic{width:16px;align-items:center;}
.wheel{width:13px;height:13px;border-radius:50%;background:conic-gradient(#efb54a,#e86f4d,#d15bb0,#8660d8,#4596e8,#46c7b4,#7cc651,#efb54a);}
.lay_box{width:168px;padding-left:2px;}
.select{height:16px;margin:2px 0 1px;background:#4b5566;border:1px solid #353c48;display:flex;align-items:center;padding:0 2px;}
.lay_box .select{gap:1px;}
.select svg{width:14px;height:13px;}
.select span{margin-right:auto;}
.sw{width:11px;height:11px;flex:none;}
.sw.white{background:#fff;margin:0 3px 0 2px;}
.sw.mag{background:#ee00ee;border:1px solid #aaa;width:13px;height:13px;margin:0 8px 0 7px;}
.ln{width:51px;height:1px;background:#e4e4e4;flex:none;margin-right:2px;}
.fields{width:109px;}
.fields .select{margin-bottom:3px;padding:0 0 0 2px;}
.select .dd{border-width:3px 3px 0;}
.lay_row{height:19.3px;display:flex;gap:5.3px;align-items:center;padding-left:2px;}
.lay_row svg{width:14px;height:14px;}

/* file tabs */
.files{height:24px;padding-top:4px;display:flex;border-bottom:2px solid #3e454e;line-height:18px;white-space:nowrap;}
.tab{background:#2a313b;display:flex;justify-content:space-between;align-items:center;color:#b9bdc2;border-radius:8px 8px 0 0;}
.tab.on{background:#3c4552;color:#eceeef;}
.t1{width:98px;margin-left:18px;padding-left:7px;}
.t2{width:97px;padding:0 9px 0 8px;}
.t3{width:207px;padding:0 6px 0 9px;letter-spacing:-.37px;}
.x{width:8px;height:8px;background:linear-gradient(45deg,transparent 44%,#c4c7ca 44%,#c4c7ca 56%,transparent 56%),linear-gradient(-45deg,transparent 44%,#c4c7ca 44%,#c4c7ca 56%,transparent 56%);}
.add{width:18px;height:16px;margin-left:9px;text-align:center;border-radius:8px;background:#2d343d;font-size:14px;line-height:16px;color:#c4c7ca;}

/* drawing area */
.canvas{height:527px;position:relative;background:#222930;}
.angle{font:72.3px "Liberation Sans",Arial,sans-serif;fill:#fff;stroke:#fff;stroke-width:.9px;letter-spacing:0;}
.cube{font:bold 8.5px "Open Sans",sans-serif;fill:#44484d;letter-spacing:0;}
.compass{font:bold 12px "Open Sans",sans-serif;fill:#b9bcbf;text-anchor:middle;letter-spacing:0;}
.wcs{font:9px "Liberation Sans",sans-serif;fill:#555b66;letter-spacing:0;}
.vp_label{position:absolute;left:2px;top:6px;letter-spacing:-.33px;}
.tip{position:absolute;left:614px;top:275px;width:193px;height:19px;border:1px solid #b4b7b8;background:#898d8e;color:#15181a;padding:0 3px;line-height:16px;letter-spacing:-.3px;display:flex;justify-content:space-between;align-items:center;white-space:nowrap;}
.tip b{width:8px;height:8px;background:#d8dada;font-size:8px;line-height:7px;text-align:center;}
.cmd{position:absolute;left:262px;bottom:0;width:758px;font-family:"DejaVu Sans Mono",monospace;font-size:9.5px;letter-spacing:-.115px;display:flex;flex-direction:column;align-items:flex-start;}
.hist{margin:0 0 3px 47px;height:13px;line-height:13px;padding:0 2px;white-space:pre;background:rgba(104,106,108,.82);color:#c8cacc;}
.dim1{color:#b4b6b8;}
.dim2{color:#d6d8d9;}
.two{height:25px;line-height:12px;color:#f4f4f4;margin-bottom:2px;}
.line{display:flex;height:21px;}
.grip{width:43px;background:#2a2f36;}
.input{width:715px;height:20px;background:#fff;color:#2a2a2a;display:flex;align-items:center;padding:0 4px 0 3px;white-space:pre;}
.input span{margin:2px auto 0 5px;}
.input em{font-style:normal;background:#cfcfcf;}
.input u{color:#1414d4;text-decoration:none;font-weight:bold;}
.up{border:2.5px solid transparent;border-bottom:3px solid #222;border-top:0;}

/* layouts + status */
.status{height:23px;display:flex;justify-content:space-between;border-top:1px solid #3a4149;}
.layouts{display:flex;gap:3px;padding-left:10px;line-height:13px;height:14px;text-align:center;color:#c0c4c8;letter-spacing:-.2px;}
.layouts span{width:49px;background:#2d333d;border-radius:0 0 6px 6px;}
.layouts .on{background:#3c4450;color:#fff;font-weight:bold;width:50px;letter-spacing:-.4px;}
.layouts .plus{width:22px;font-size:13px;}
.tools{width:478px;height:21px;display:grid;grid-template-columns:46px 20px 18px 16px 18px 20px 13px 18px 13px 19px 19px 15px 18px 20px 20px 15px 10px 24px 9px 24px 18px 22px 20px 23px 17px;align-items:center;justify-items:center;color:#e6e8ea;background:#272e36;}
.tools svg{width:14px;height:14px;}
.tools .hi{width:18px;height:18px;padding:2px;background:#6193bd;}
.tools .dd{border-width:3px 3px 0;}
.mod{font-size:10.2px;letter-spacing:-.3px;}

/* taskbar */
.task{height:32px;display:flex;background:linear-gradient(90deg,#21383e,#223840 55%,#1f2b42 80%,#1b2340);}
.start{width:38px;display:flex;align-items:center;justify-content:center;}
.search{width:231px;background:#f2f3f3;border:1px solid #fff;display:flex;align-items:center;padding-left:9px;color:#3a3a3a;font-size:12.6px;letter-spacing:-.55px;}
.search span{margin:0 auto 0 7px;}
.apps{display:flex;}
.app{width:39.3px;display:flex;align-items:center;justify-content:center;position:relative;}
.app svg{width:20px;height:20px;}
.run{background:linear-gradient(#78b4dc,#78b4dc) 50% 100%/32px 2px no-repeat;}
.run.act{background:linear-gradient(#78b4dc,#78b4dc) 50% 100%/100% 2px no-repeat #526068;}
.badge{position:absolute;left:21px;top:15px;width:13px;height:13px;border-radius:50%;background:#27353f;border:1px solid #8d9a9f;color:#fff;font-size:10px;line-height:11px;text-align:center;}
.badge.l{top:14px;background:#4c6170;border:0;font-size:8px;font-weight:normal;line-height:13px;}
.tray{margin-left:auto;width:379px;display:flex;align-items:center;}
.tray>svg{width:14px;height:14px;margin-right:5.2px;}
.tray>svg:first-child{width:22px;height:20px;margin:0 4px 0 2px;}
.wt{width:111px;font-size:11.8px;letter-spacing:-.5px;white-space:nowrap;}
.por{width:26px;font-size:10.5px;margin-left:1px;}
.clock{width:50px;text-align:center;font-size:10px;line-height:14px;letter-spacing:-.5px;}
.note{margin-left:14px;}
.note text{font:10px "Open Sans",sans-serif;fill:#fff;text-anchor:middle;}
```
